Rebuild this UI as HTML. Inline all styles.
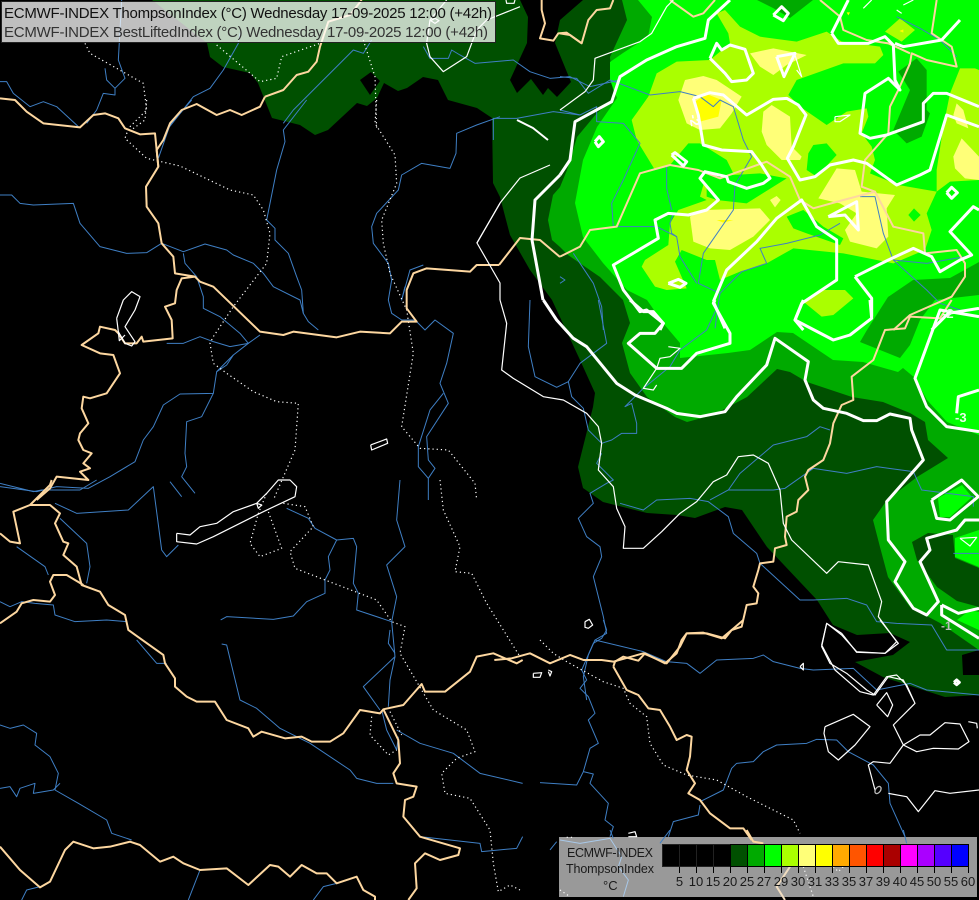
<!DOCTYPE html>
<html><head><meta charset="utf-8"><title>ECMWF-INDEX ThompsonIndex</title>
<style>
html,body{margin:0;padding:0;background:#000;width:979px;height:900px;overflow:hidden}
svg{display:block;position:absolute;left:0;top:0}
polyline{fill:none;vector-effect:non-scaling-stroke;stroke-linejoin:round}
.b polyline{stroke:#3f7fc4;stroke-width:1}
.t polyline{stroke:#fdd7a0;stroke-width:2}
.w polyline{stroke:#fff;stroke-width:3}
.n polyline{stroke:#fff;stroke-width:1.2}
.d polyline{stroke:#fff;stroke-width:1.2;stroke-dasharray:1.2 3}
text{font-family:"Liberation Sans",sans-serif}
</style></head><body>
<svg width="979" height="900" viewBox="0 0 979 900" xmlns="http://www.w3.org/2000/svg">
<rect width="979" height="900" fill="#000"/>
<polygon fill="#005000" points="152,0 207,43 210,57 223,67 250,73 258,83 272,118 300,125 315,135 328,130 357,103 367,106 377,98 384,83 398,91 407,88 423,77 438,80 448,100 477,108 492,118 493,183 500,197 510,235 530,270 552,300 580,360 595,393 593,407 578,467 583,488 603,502 647,513 677,515 695,518 725,507 742,510 767,547 817,600 833,625 857,635 890,633 910,642 893,655 855,662 883,677 917,688 945,697 979,695 979,675 963,675 962,655 979,650 979,0 583,0 560,20 555,43 571,82 557,97 548,88 543,95 531,79 517,93 510,80 527,43 528,17 520,0"/>
<polygon fill="#000" points="360,80 371,72 380,81 370,95"/>
<polygon fill="#00aa00" points="622,0 627,20 610,57 612,85 615,98 597,113 577,137 567,170 560,187 553,195 548,220 552,240 560,247 568,255 600,277 623,300 630,323 622,343 630,373 647,397 675,417 687,422 713,415 747,397 777,369 790,372 807,382 852,397 883,402 910,413 925,422 928,440 948,458 917,477 887,500 873,520 880,547 888,577 910,607 940,623 979,650 979,0"/>
<polygon fill="#00ff00" points="638,0 652,17 648,37 623,53 610,62 610,80 617,98 597,127 583,160 575,203 583,237 603,263 627,290 647,300 663,323 680,343 680,358 728,353 750,350 777,332 793,333 833,360 863,362 898,372 903,368 915,378 927,400 947,422 979,435 979,0"/>
<polygon fill="#00aa00" points="867,330 888,297 913,280 950,278 979,262 979,295 935,300 920,320 910,345 900,358 860,342"/>
<polygon fill="#00aa00" points="757,0 773,8 790,18 813,0"/>
<polygon fill="#005000" points="912,542 928,533 953,535 955,558 979,568 979,607 957,601 937,587 917,560"/>
<polygon fill="#00ff00" points="938,498 962,485 972,497 950,517 940,517"/>
<polygon fill="#00ff00" points="955,538 979,530 979,567 955,557"/>
<polygon fill="#00ff00" points="957,620 970,610 979,612 979,630"/>
<g transform="translate(560 0) scale(.33333)">
<polygon fill="#00aa00" points="1015,215 1070,175 1100,210 1100,330 1110,340 1085,410 1040,430 1000,390 1050,270"/>
<polygon fill="#aaff00" points="470,40 495,30 540,80 600,110 710,125 800,95 845,125 960,140 970,165 945,190 850,190 710,240 685,285 720,320 800,375 860,335 920,325 925,350 905,400 935,440 945,480 930,520 1015,555 1130,575 1130,510 1150,380 1170,280 1200,205 1245,205 1257,210 1257,540 1170,545 1130,575 1100,640 1115,690 1095,750 1000,790 850,760 700,745 620,790 540,815 480,840 465,780 440,780 365,750 345,785 380,865 320,870 285,860 245,800 255,780 325,735 330,670 355,630 440,600 420,590 430,555 520,520 500,480 420,430 385,430 330,495 285,510 230,420 215,360 265,290 290,220 350,185 450,180 510,130 505,100"/>
<polygon fill="#00ff00" points="760,435 800,430 830,465 770,530 740,510 745,460"/>
<polygon fill="#00ff00" points="440,530 600,520 680,535 560,610 470,600 440,590"/>
<polygon fill="#00ff00" points="680,650 730,630 790,680 850,715 840,735 740,700 700,685"/>
<polygon fill="#00ff00" points="1045,645 1062,625 1082,645 1062,665"/>
<polygon fill="#aaff00" points="975,95 1020,55 1065,90 1025,125"/>
<polygon fill="#aaff00" points="730,905 790,870 855,870 880,895 820,945 785,950"/>
<polygon fill="#ffff78" points="570,160 640,145 740,165 680,195 640,225 600,200"/>
<polygon fill="#ffff78" points="375,240 430,228 470,240 545,290 515,340 480,385 420,390 380,370 355,300"/>
<polygon fill="#ffff00" points="405,305 440,282 485,300 475,350 420,365"/>
<polygon fill="#ffff78" points="635,315 690,350 695,440 725,470 720,480 665,480 620,435 605,395 610,335"/>
<polygon fill="#ffff78" points="775,595 830,505 885,510 905,575 1005,585 980,625 985,710 950,745 870,725 855,690 890,640 840,610"/>
<polygon fill="#ffff78" points="390,650 430,630 600,625 630,660 580,710 510,750 450,745 400,725"/>
<polygon fill="#ffff00" points="470,660 520,660 490,668"/>
<polygon fill="#ffff78" points="1180,470 1205,415 1257,470 1257,540 1215,535 1185,505"/>
<polygon fill="#ffff78" points="1180,345 1190,310 1210,330 1225,385 1190,370"/>
<polygon fill="#ffff78" points="630,600 650,588 662,600 645,622"/>
<polygon fill="#ffff00" points="860,37 870,37 865,46"/>
<polygon fill="#ffff00" points="1018,93 1030,88 1030,98"/>
</g>
<rect x="559" y="837" width="418" height="60" fill="#999"/>

<!-- rivers -->
<g class="b">
<g transform="scale(.33333)">
<polyline points="0,245 20,245 40,280 90,320 130,305 170,320 235,380"/>
<polyline points="315,205 320,240 345,265 375,235 355,180 365,0"/>
<polyline points="345,265 345,285 310,280 290,330 260,370"/>
<polyline points="850,370 880,330 950,260 1030,180 1060,150 1090,160 1115,120"/>
<polyline points="505,385 580,290 630,265 670,210 715,130 720,100"/>
</g>
<g transform="translate(200 0) scale(.33333)">
<polyline points="670,140 690,175 745,175 755,150 780,165 825,190 940,180 990,215 1050,235 1110,230 1170,260 1260,240"/>
<polyline points="880,420 880,355 950,355 1060,335 1140,345"/>
</g>
<g transform="translate(560 0) scale(.33333)">
<polyline points="0,230 50,235 85,280 150,240 270,285 360,275 420,290 460,320 480,300 520,320 550,420 575,470 525,555 520,630 430,760 415,850 480,880"/>
<polyline points="0,330 60,345 110,320 110,365 190,370 240,430 190,540 155,610 160,680 290,680 350,710 360,770 410,850"/>
<polyline points="340,640 330,670 335,700 350,710"/>
<polyline points="320,500 320,565 335,630"/>
<polyline points="465,985 480,880 545,815 620,790 600,745 680,730 780,705 840,670"/>
<polyline points="900,590 945,590 970,700 1000,780 1100,870 1140,910 1200,930"/>
<polyline points="1010,50 1080,85 1140,120 1190,170"/>
<polyline points="0,830 15,840 0,850"/>
<polyline points="40,760 100,850 125,920 130,990"/>
<polyline points="1000,780 1100,790 1215,770"/>
</g>
<g transform="translate(480 300) scale(.33333)">
<polyline points="150,0 145,140 165,230 230,262 265,245 275,290 310,325 325,390 365,430 395,420 425,400 470,400 470,370 455,310 435,320 490,265 570,200 600,150 680,90 710,25 700,0"/>
<polyline points="355,0 380,130 300,190 265,245"/>
<polyline points="365,460 350,490 400,540 380,550 330,580 340,610 295,655 320,710 360,740 365,770 340,830 370,950 380,1000 345,1020 325,1065 310,1130 320,1200"/>
<polyline points="420,610 490,630 530,600 630,595 685,605 745,650 760,700 830,760 840,790 960,900 1000,900 1100,895 1160,915 1190,965 1250,970 1355,975 1400,1050 1497,1050"/>
<polyline points="345,1020 490,1055 560,1085 620,1090 660,1120 710,1080 820,1075 850,1065 880,1085 960,1105 1000,1110 1120,1105 1190,1170 1290,1150 1340,1170 1497,1185"/>
<polyline points="690,600 745,570 780,520 880,435 980,410 1020,380 1050,390"/>
<polyline points="745,570 880,570 915,565 1000,505 1100,520 1190,500 1300,515 1325,570 1480,590 1480,620"/>
<polyline points="1420,760 1497,760"/>
</g>
<g transform="translate(0 100) scale(.33333)">
<polyline points="0,285 35,285 60,310 100,315 220,310 240,370 300,440 380,460 440,458 485,430 550,455 615,432 680,450 700,465 760,490 790,520 820,560 900,600 910,640 925,665 955,690"/>
<polyline points="550,460 555,490 590,530 610,590 610,625 660,650 720,700 745,730 690,740 640,725 600,710 550,730 500,730"/>
<polyline points="780,705 745,730 700,765 650,815 640,880 540,882 490,915 460,980 430,1020 405,1085 330,1130 265,1165 170,1160 110,1175 0,1160"/>
<polyline points="650,815 680,795 700,765"/>
<polyline points="640,880 605,950 560,965 555,1060 560,1100 545,1130 585,1180"/>
<polyline points="575,0 510,75 475,175"/>
<polyline points="920,0 850,90 855,125 830,210 800,360 825,385 825,420 865,460 890,530 905,570 910,640"/>
<polyline points="1500,50 1430,75 1370,100 1368,160 1350,205 1265,190 1205,225 1195,270 1130,340 1115,380 1120,430 1165,490 1175,540 1165,600 1175,640 1205,660 1245,660 1275,690 1305,660 1360,700 1340,790 1320,850 1345,910 1280,1010 1285,1080 1305,1105 1285,1135 1285,1200"/>
<polyline points="1330,880 1290,930 1255,1040 1255,1100 1285,1135"/>
<polyline points="1215,560 1205,600 1230,510 1270,495"/>
</g>
<g transform="translate(0 480) scale(.33333)">
<polyline points="0,10 100,35 125,30 240,30 290,0"/>
<polyline points="165,70 230,100 385,90 460,20 485,210 500,230 535,195"/>
<polyline points="510,5 545,50"/>
<polyline points="180,115 260,190 270,260 260,310"/>
<polyline points="50,200 135,260 145,285"/>
<polyline points="0,365 30,380 65,365 105,370 160,375 165,405 225,425 320,420 380,425"/>
<polyline points="410,480 470,550 500,550"/>
<polyline points="662,420 680,410 820,418 880,408 920,365 975,340 975,300 990,270 985,230 1010,180 1060,175 1070,200 1060,310 1075,340 1070,390 1175,425 1190,350 1160,255 1215,200 1190,120 1200,0"/>
<polyline points="860,85 925,115 945,145 1010,180"/>
<polyline points="1175,425 1185,530 1090,620 1140,690"/>
<polyline points="1170,450 1165,490 1185,520"/>
<polyline points="1185,530 1170,600 1165,680"/>
<polyline points="665,492 680,495 720,660 770,685 840,745 930,790 1050,870 1070,895 1130,910 1180,910"/>
<polyline points="1145,690 1160,750 1190,810 1195,770"/>
<polyline points="1190,750 1260,790 1360,820 1440,880 1568,910"/>
<polyline points="0,735 30,745 70,735 110,760 105,795 150,830 175,880 165,930 235,970 320,1020 335,1060 395,1080"/>
<polyline points="0,925 30,920 50,950 60,925 105,910 100,940 160,930 180,910"/>
<polyline points="65,1260 80,1230 120,1220"/>
<polyline points="565,1260 600,1170"/>
<polyline points="940,1260 970,1220 1010,1210"/>
<polyline points="1260,1070 1440,1090 1445,1115 1550,1105 1568,1070"/>
</g>
<g transform="translate(540 620) scale(.33333)">
<polyline points="160,70 185,55 200,30 190,0"/>
<polyline points="160,70 125,150 140,180 120,205 145,230 165,280 145,300 175,370 150,385 130,455 110,495 0,488"/>
<polyline points="130,455 160,462 150,490 205,550 195,600 220,620 210,650"/>
<polyline points="480,545 550,510 575,445 590,430 640,425 670,395 710,375 800,370 830,358 890,360 925,395 1000,435 1045,490 1050,550 1095,650"/>
<polyline points="480,555 475,585 400,605 385,650"/>
</g>
<g transform="translate(550 830) scale(.33333)">
<polyline style="stroke:#a8c8e8" points="30,30 90,40 180,25 215,80 205,110 235,150 220,200"/>
<polyline points="0,60 20,35"/>
<polyline points="330,40 360,0"/>
<polyline points="1060,0 1070,40"/>
<polyline points="180,0 190,25"/>
</g>
</g>

<!-- dotted borders -->
<g class="d">
<g transform="scale(.33333)">
<polyline points="255,130 270,160 430,250 440,330 385,385"/>
<polyline points="650,135 780,245 830,235 845,170 960,130"/>
<polyline points="1090,120 1125,230 1130,390"/>
</g>
<g transform="translate(0 100) scale(.33333)">
<polyline points="440,0 435,60 380,100 375,115 440,175 540,198 690,270 760,285 790,330 810,400 800,490 700,620 640,710 630,730 640,790 680,820 760,875 830,905 895,910 885,1050 820,1200"/>
<polyline points="1130,0 1125,70 1185,165 1190,250 1145,360 1150,430 1170,520 1220,630 1240,760 1205,980 1260,1045 1345,1050 1425,1150 1430,1200"/>
</g>
<g transform="translate(0 480) scale(.33333)">
<polyline points="1320,0 1330,90 1380,200 1365,275 1415,280 1460,370 1560,530"/>
<polyline points="800,40 775,100 750,190 780,230 845,205 805,95"/>
<polyline points="850,70 915,80 940,140 870,215 885,265 1130,360 1175,425 1215,440 1200,520 1300,690 1400,750 1425,815 1370,835 1325,880 1335,940 1410,955 1470,1050 1480,1150 1495,1235 1530,1215 1560,1230"/>
<polyline points="1115,710 1110,765 1165,825 1190,810"/>
<polyline points="1170,695 1205,765"/>
</g>
<g transform="translate(540 620) scale(.33333)">
<polyline points="0,60 40,100 80,125 190,185 250,205 270,250 320,290 330,370 370,435 440,465 530,480 620,530 760,600 780,640"/>
</g>
<g transform="translate(550 830) scale(.33333)">
<polyline points="760,110 790,200"/>
<polyline points="850,110 865,125 880,110"/>
<polyline points="30,180 60,200"/>
<polyline points="50,22 75,22"/>
</g>
</g>

<!-- borders -->
<g class="t">
<g transform="translate(0 100) scale(.33333)">
<polyline points="0,-5 45,0 80,35 130,70 240,82 280,45 315,40 355,55 375,85 420,103 465,100 475,200 438,260 440,320 475,370 485,430 520,470 525,520 585,530 600,545 640,560 780,695 850,705 880,695 1010,712 1080,695 1170,700 1205,665 1250,665 1220,625 1220,570 1240,520 1280,505 1410,515 1430,495 1497,495"/>
<polyline points="585,530 545,535 530,570 525,610 495,620 515,660 518,715 430,725 425,710 410,730 375,730 355,700 345,690 300,680 295,700 245,735 300,760 340,765 360,820 340,850 320,880 270,895 250,890 245,925 265,970 240,1000 235,1020 250,1050 275,1060 250,1090 270,1105 240,1115 265,1140 170,1130 150,1165 110,1200"/>
<polyline points="475,200 470,150 490,120 510,70 545,30 590,12 650,45 690,30 725,45 780,20 795,-10"/>
</g>
<g transform="scale(.33333)">
<polyline points="795,290 850,270 890,225 925,215 950,185 960,140 985,65 1050,45 1085,0"/>
<polyline points="1497,795 1560,714 1620,720 1680,771"/>
</g>
<g transform="translate(200 0) scale(.33333)">
<polyline points="1025,0 1025,30 1035,70 1020,115 1060,122 1075,100 1100,98 1145,130 1165,60 1190,30 1230,25 1240,0"/>
</g>
<g transform="translate(560 0) scale(.33333)">
<polyline points="0,100 30,105 65,130"/>
<polyline points="0,770 60,740 90,690 170,680 205,600 240,520 330,495 415,510 480,535 620,485 690,530 720,600 760,625 850,600 945,575 1000,680 1090,700 1095,760 1190,750 1215,790 1215,830 1175,890 1050,945 1000,990"/>
<polyline points="945,575 905,560 915,480 985,400 990,320 1015,270 1050,190 1055,160 1100,180 1190,200 1175,140 1115,100 1130,0"/>
<polyline points="330,0 400,50 430,40 465,0"/>
<polyline points="780,0 840,50 850,90 920,120 985,130 1050,160"/>
</g>
<g transform="translate(480 300) scale(.33333)">
<polyline points="1415,0 1380,55 1290,50 1275,85 1215,90 1180,180 1115,230 1120,300 1085,315 1060,370 1050,430 1030,480 985,510 975,530 985,570 955,600 950,635 920,650 915,710 920,735 885,745 880,785 840,790 835,810 820,860 835,880 830,910 800,915 785,980 755,990 735,1015 680,1000 620,1000 600,1040 560,1090 490,1060 400,1085 365,1080 310,1080 270,1065 210,1090 150,1060 95,1075 43,1080"/>
</g>
<g transform="translate(0 480) scale(.33333)">
<polyline points="155,0 150,15 90,75 40,95 60,190 30,185 0,160"/>
<polyline points="90,75 150,75 180,100 165,130 190,185 205,190 190,225 230,260 245,315 300,335 325,375 375,405 385,450 490,525 495,550 525,595 525,620 560,650 590,665 645,665 680,720 745,745 760,770 785,755 855,775 905,770 935,785 990,785 1030,760 1080,690 1140,700 1150,688 1210,675 1265,612 1275,635 1335,635 1410,575 1430,530 1480,520 1550,550 1568,540"/>
<polyline points="1150,688 1195,780 1200,850 1180,880 1190,910 1250,920 1240,950 1215,960 1210,1010 1260,1070 1380,1105 1375,1125 1320,1140 1275,1120 1245,1150 1250,1225 1225,1260"/>
<polyline points="0,430 50,395 65,370 100,360 150,365 165,345 150,305 160,285 200,285 250,315"/>
<polyline points="0,1100 60,1170 120,1222 150,1205 195,1110 220,1085 280,1105 330,1100 390,1085 420,1095 480,1145 520,1130 550,1150 600,1170 680,1165 745,1215 810,1155 835,1160 870,1190 905,1155 950,1180 980,1180 1010,1210 1070,1190 1090,1230 1125,1250 1125,1260"/>
</g>
<g transform="translate(540 620) scale(.33333)">
<polyline points="220,140 260,210 295,225 325,265 360,270 390,320 410,360 440,345 455,350 450,410 440,450 465,490 445,520 480,540 510,580 570,625 610,625 635,660"/>
<polyline points="220,140 225,125 250,110 295,122 315,100 375,130 410,100 425,60 440,40 490,38 545,55 575,30 610,0"/>
</g>
<g transform="translate(550 830) scale(.33333)">
<polyline style="stroke:#f0dcc0" points="720,110 680,170 705,210"/>
<polyline points="590,0 610,35 640,40"/>
</g>
</g>

<!-- thin contours -->
<g class="n">
<g transform="translate(560 0) scale(.33333)">
<polyline points="0,330 75,275 100,240 105,175 240,125 275,100 320,20 340,0"/>
<polyline points="705,165 725,230 710,210"/>
<polyline points="825,350 870,345 840,365 825,365 825,350"/>
<polyline points="910,25 935,0"/>
<polyline points="1030,15 1060,0"/>
<polyline points="1010,30 1025,40"/>
</g>
<g transform="scale(.33333)">
<polyline points="1560,20 1460,60 1430,90 1400,170 1330,215 1290,170 1280,130 1290,60 1340,0"/>
</g>
<g transform="translate(200 0) scale(.33333)">
<polyline points="692,62 705,55 717,62 705,70 692,62"/>
<polyline points="918,0 920,10 942,10 945,0"/>
</g>
<polyline points="477,243 500,203 520,178 550,165"/>
<polyline points="477,243 500,283 500,300"/>
<g transform="translate(480 300) scale(.33333)">
<polyline points="60,0 80,70 65,210 100,235 190,290 250,300 320,340 355,380 365,430 355,510 400,560 410,625 435,680 430,745 490,745 545,695 600,640 650,605 700,545 740,525 775,470 820,465 865,490 900,570 910,670 935,720 1040,820 1075,785 1165,795 1205,905 1195,950 1250,1025 1215,1060 1130,1055 1085,1005 1040,970 1025,1040 1050,1090 1100,1120 1160,1170 1185,1185 1225,1130 1270,1140 1300,1200"/>
<polyline points="315,965 328,958 338,975 325,985 315,982 315,965"/>
<polyline points="160,1120 185,1118 180,1132 160,1132 160,1120"/>
<polyline points="205,1110 215,1115 210,1128 205,1115"/>
<polyline points="565,140 600,145 570,170 540,175 530,205 490,265 520,270 530,255"/>
<polyline points="1440,715 1490,712 1470,738 1440,715"/>
</g>
<g transform="translate(540 620) scale(.33333)">
<polyline points="1020,0 1075,70 1035,100 950,97 905,40 860,10 845,75 885,150 960,215 1000,225 1040,170 1070,165 1100,195 1125,250 1060,315 1090,375 1050,430 1000,425 985,435 1005,510"/>
<polyline points="855,320 940,283 990,320 945,375 895,420 865,395 852,340 855,320"/>
<polyline points="1010,255 1040,218 1058,255 1043,290 1010,255"/>
<polyline points="1090,375 1140,345 1170,345 1215,308 1260,312 1287,365 1255,387 1180,385 1130,395 1090,375"/>
<polyline points="1045,520 1100,530 1135,575 1185,512 1230,520 1317,510"/>
<polyline points="780,140 790,130 790,150 780,140"/>
<polyline points="1285,305 1310,310 1312,325"/>
<polyline points="265,640 285,635 290,650 265,650"/>
</g>
<g transform="translate(0 480) scale(.33333)">
<polyline points="530,160 570,165 600,140 650,130 700,95 770,70 800,40 835,0 870,0 890,20 885,50 790,95 640,170 590,192 530,185 530,160"/>
<polyline points="770,70 785,75 775,85 770,70"/>
</g>
<g transform="translate(0 100) scale(.33333)">
<polyline points="350,655 370,600 395,575 420,590 405,630 375,680 405,725 395,738 375,730 355,695 350,655"/>
<polyline points="355,695 358,722 375,705"/>
<polyline points="1112,1035 1160,1017 1163,1030 1115,1050 1112,1035"/>
<polyline points="1430,430 1500,310"/>
</g>
</g>

<!-- thick contours -->
<g class="w">
<polyline points="560,175 535,200 532,240 543,300"/>
<polyline points="517,120 533,128 548,140" style="stroke-width:2"/>
<g transform="translate(560 0) scale(.33333)">
<polyline points="0,525 30,480 45,365 155,305 180,230 260,180 350,140 435,115 445,60 510,0"/>
<polyline points="450,175 470,130 485,150 510,135 555,148 580,220 560,240 515,245 495,220 450,175"/>
<polyline points="400,295 450,278 490,285 560,345 640,298 680,295 715,315 738,345 700,440 682,475 720,540 765,530 810,495 880,480 920,490 1010,555 1080,525 1110,510 1160,345 1257,380"/>
<polyline points="400,295 415,345 430,435 485,450 575,455 605,495 630,535 610,550 560,565 505,545 500,530 435,515 420,535 475,600 440,630 385,645 325,640 285,660 295,715 160,795 190,870 240,935 260,930 310,970 300,990"/>
<polyline points="640,45 665,20 685,40 670,62 640,45"/>
<polyline points="815,100 840,50 865,0"/>
<polyline points="815,100 835,130 925,130 975,110 1000,135 1005,240 1020,270 985,235 915,280 900,400 930,415 980,405 1090,365 1090,310 1120,280 1160,280 1257,320"/>
<polyline points="1005,130 1030,140 1145,120 1200,60"/>
<polyline points="650,170 705,160 672,230 650,170"/>
<polyline points="105,425 118,410 130,425 115,440 105,425"/>
<polyline points="335,465 345,458 380,485 370,498 335,465"/>
<polyline points="325,850 355,838 378,850 360,862 325,850"/>
<polyline points="1160,578 1175,562 1192,578 1175,595 1160,578"/>
<polyline points="805,650 890,605 895,690 855,645 805,650"/>
<polyline points="460,905 500,810 590,725 650,655 725,600 770,680 830,720 830,840 725,910 705,960 730,990"/>
<polyline points="460,905 495,985"/>
<polyline points="885,830 985,780 1060,745 1115,770 1140,815 1200,780 1235,765 1170,695 1240,620 1257,630"/>
<polyline points="885,830 935,895 935,950"/>
<polyline points="1115,990 1165,940 1257,925"/>
</g>
<g transform="translate(480 300) scale(.33333)">
<polyline points="190,0 230,60 280,115 320,140 410,250 465,285 560,325 590,340 660,350 735,335 770,290 860,195 885,115 985,185 975,240 1000,300 1030,325 1100,340 1150,362 1190,362 1230,342 1290,355 1295,390 1330,480 1220,605 1225,720 1275,785 1245,845 1300,925 1340,945 1375,905 1320,785 1350,750 1340,715 1430,690 1455,660 1497,660"/>
<polyline points="970,0 945,60 1060,120 1110,105 1175,55 1170,0"/>
<polyline points="450,0 490,35 520,35 550,70 525,100 480,100 445,130 530,205 605,205 650,160 750,130 750,100 700,10 705,0"/>
<polyline points="1497,395 1400,380 1340,320 1305,235 1380,30 1497,50"/>
<polyline points="1430,340 1435,290 1497,270"/>
<polyline points="1355,600 1445,540 1495,590 1410,660 1370,655 1355,600"/>
<polyline points="1385,915 1435,940 1497,925"/>
<polyline points="1385,915 1385,945 1497,1015"/>
<polyline points="1422,1147 1430,1140 1438,1147 1430,1154 1422,1147"/>
</g>
</g>
<text x="691" y="127" fill="#fff" font-size="13" font-weight="bold" transform="rotate(80 697 120)">-2</text>
<text x="942" y="318" fill="#e8ffe8" font-size="13" font-weight="bold">-2</text>
<text x="955" y="422" fill="#e8ffe8" font-size="13" font-weight="bold">-3</text>
<text x="941" y="630" fill="#bbb" font-size="12" font-weight="bold">-1</text>
<ellipse cx="878" cy="790" rx="2.5" ry="4" transform="rotate(35 878 790)" fill="none" stroke="#bbb" stroke-width="1.3"/>

<!-- header -->
<rect x="1.5" y="1.5" width="494" height="41" fill="#fff" fill-opacity=".75" stroke="#222" stroke-width="1"/>
<text x="4" y="18" font-size="15" fill="#111" textLength="488" lengthAdjust="spacing">ECMWF-INDEX ThompsonIndex (°C) Wednesday 17-09-2025 12:00 (+42h)</text>
<text x="4" y="37" font-size="15" fill="#333" textLength="484" lengthAdjust="spacing">ECMWF-INDEX BestLiftedIndex (°C) Wednesday 17-09-2025 12:00 (+42h)</text>

<!-- legend -->
<g stroke="#000" stroke-width="1">
<rect x="662.5" y="844.5" width="17" height="22" fill="#000" stroke="#222"/>
<rect x="679.5" y="844.5" width="17" height="22" fill="#000" stroke="#222"/>
<rect x="696.5" y="844.5" width="17" height="22" fill="#000" stroke="#222"/>
<rect x="713.5" y="844.5" width="17" height="22" fill="#000" stroke="#222"/>
<rect x="730.5" y="844.5" width="17" height="22" fill="#005000"/>
<rect x="747.5" y="844.5" width="17" height="22" fill="#00aa00"/>
<rect x="764.5" y="844.5" width="17" height="22" fill="#00ff00"/>
<rect x="781.5" y="844.5" width="17" height="22" fill="#aaff00"/>
<rect x="798.5" y="844.5" width="17" height="22" fill="#ffff78"/>
<rect x="815.5" y="844.5" width="17" height="22" fill="#ffff00"/>
<rect x="832.5" y="844.5" width="17" height="22" fill="#ffaa00"/>
<rect x="849.5" y="844.5" width="17" height="22" fill="#ff5500"/>
<rect x="866.5" y="844.5" width="17" height="22" fill="#ff0000"/>
<rect x="883.5" y="844.5" width="17" height="22" fill="#aa0000"/>
<rect x="900.5" y="844.5" width="17" height="22" fill="#ff00ff"/>
<rect x="917.5" y="844.5" width="17" height="22" fill="#aa00ff"/>
<rect x="934.5" y="844.5" width="17" height="22" fill="#5500ff"/>
<rect x="951.5" y="844.5" width="17" height="22" fill="#0000ff"/>
<path fill="none" d="M679.5 867v6M696.5 867v6M713.5 867v6M730.5 867v6M747.5 867v6M764.5 867v6M781.5 867v6M798.5 867v6M815.5 867v6M832.5 867v6M849.5 867v6M866.5 867v6M883.5 867v6M900.5 867v6M917.5 867v6M934.5 867v6M951.5 867v6M968.5 867v6"/>
</g>
<g font-size="13" fill="#1a1a1a" text-anchor="middle">
<text x="679.5" y="886">5</text><text x="696" y="886">10</text><text x="713" y="886">15</text><text x="730" y="886">20</text><text x="747" y="886">25</text><text x="764" y="886">27</text><text x="781" y="886">29</text><text x="798" y="886">30</text><text x="815" y="886">31</text><text x="832" y="886">33</text><text x="849" y="886">35</text><text x="866" y="886">37</text><text x="883" y="886">39</text><text x="900" y="886">40</text><text x="917" y="886">45</text><text x="934" y="886">50</text><text x="951" y="886">55</text><text x="968" y="886">60</text>
</g>
<g font-size="12.5" fill="#1a1a1a">
<text x="567" y="857" textLength="86" lengthAdjust="spacing">ECMWF-INDEX</text>
<text x="566" y="873" textLength="88" lengthAdjust="spacing">ThompsonIndex</text>
<text x="603" y="890" font-size="13">°C</text>
</g>
</svg>
</body></html>
